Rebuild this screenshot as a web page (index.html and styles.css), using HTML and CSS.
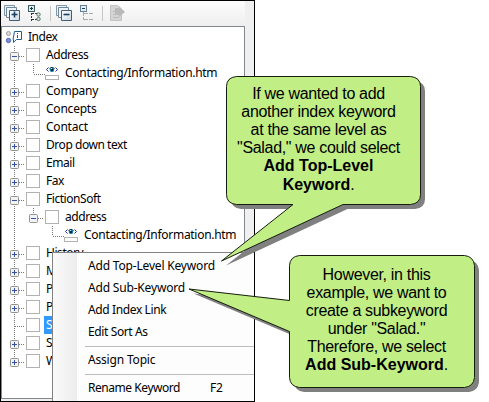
FILE: index.html
```html
<!DOCTYPE html>
<html lang="en">
<head>
<meta charset="utf-8">
<title>Index</title>
<link rel="stylesheet" href="styles.css">
</head>
<body>
<svg class="defs" width="0" height="0">
  <defs>
    <linearGradient id="page" x2="1" y2="1"><stop offset="0" stop-color="#fff"/><stop offset="1" stop-color="#ccd9e4"/></linearGradient>
    <g id="box"><rect x="24.5" y="2.500" width="13" height="13" fill="#fff" stroke="#b2b2b2"/></g>
    <g id="knob"><rect x="8.500" y="6.500" width="8" height="8" rx="1" fill="#f3f3f3" stroke="#929292"/><path d="M10 10.500h5" stroke="#3450a8"/></g>
    <g id="vline"><path d="M12.500 0v18" class="dots"/></g>
    <g id="minus"><path d="M17 10.500h6" class="dots"/><use href="#knob"/><use href="#box"/></g>
    <g id="plus"><use href="#minus"/><path d="M12.500 8v5" stroke="#3450a8"/></g>
    <g id="topic"><path d="M31.500 0v10M32 10.500h11" class="dots"/><rect x="43.500" y="11.500" width="13" height="4" fill="#fff" stroke="#b2b2b2"/><path d="M46.500 3.500l-2 2 2 2M53.500 3.500l2 2-2 2" fill="none" stroke="#1a2cb0"/><path d="M47.500 4.500q2.500-2.500 5 0" fill="none" stroke="#222"/><circle cx="50" cy="5.700" r="2.300" fill="#087d9c"/><circle cx="50" cy="6" r="1" fill="#002"/><path d="M49 4.500h1" stroke="#9ff"/></g>
    <g id="stack"><path d="M.500.500h10v10h-10z" fill="#edf4f9" stroke="#8197a8"/><path d="M2.500 2.500h10v10h-10z" fill="#edf4f9" stroke="#708799"/><path d="M5.500 5.500h10v10h-10z" fill="url(#page)" stroke="#415e76"/></g>
  </defs>
</svg>
<main class="stage">
  <section class="window">
    <header class="toolbar">
      <svg width="130" height="25" viewBox="0 0 130 25">
        <use href="#stack" x="3" y="4"/><path d="M10.500 13.500h6M13.500 10.500v6" stroke="#173f64" stroke-width="1.600"/>
        <g fill="none" stroke="#333" stroke-dasharray="2 1"><path d="M30.500 9v11M31 12.500h5M31 18.500h5"/></g>
        <rect x="27.500" y="4.500" width="6" height="6" fill="#dcece8" stroke="#3e5d67"/><path d="M29 7.500h3M30.500 6v3" stroke="#17413c"/>
        <g fill="#dbe9df" stroke="#57756c"><circle cx="37.500" cy="13.500" r="1.700"/><circle cx="37.500" cy="18" r="1.700"/></g>
        <path d="M49.500 5v15M101.500 5v15" stroke="#c6c6c6"/>
        <use href="#stack" x="55" y="4"/><path d="M62.500 13.500h6" stroke="#173f64" stroke-width="1.600"/>
        <path d="M82.500 11v8M83 12.500h9M83 18.500h9" fill="none" stroke="#aaa" stroke-dasharray="4 1"/>
        <rect x="79.500" y="4.500" width="6" height="6" fill="#e5eef4" stroke="#657f95"/><path d="M81 7.500h3" stroke="#173f64"/>
        <path d="M109.500 4.500h7l4 4v11h-11z" fill="#d4d4d4" stroke="#c2c2c2"/><path d="M112 10.500h5M112 13.500h6M112 16.500h6" stroke="#bbb"/><path d="M114 7h4v-2l6 6-6 5v-3h-4z" fill="#b9b9b9"/>
      </svg>
    </header>
    <div class="tree">
      <div class="row root"><svg viewBox="0 0 24 18"><circle cx="6.500" cy="5.500" r="2" fill="#ddd" stroke="#999"/><circle cx="6.500" cy="12.500" r="2.200" fill="#7590d8" stroke="#5368af"/><path d="M12.500 3.500h7v8h-5l-3 3v-3h-.5z" fill="#fff" stroke="#18628d"/><path d="M15.500 5v1M15.500 7v3" stroke="#18628d"/></svg><span>Index</span></div>
      <div class="row"><svg><use href="#vline"/><use href="#minus"/></svg><span>Address</span></div>
      <div class="row child"><svg><use href="#vline"/><use href="#topic"/></svg><span class="file">Contacting/Information.htm</span></div>
      <div class="row"><svg><use href="#vline"/><use href="#plus"/></svg><span class="wide">Company</span></div>
      <div class="row"><svg><use href="#vline"/><use href="#plus"/></svg><span class="wide">Concepts</span></div>
      <div class="row"><svg><use href="#vline"/><use href="#plus"/></svg><span class="wide">Contact</span></div>
      <div class="row"><svg><use href="#vline"/><use href="#plus"/></svg><span>Drop down text</span></div>
      <div class="row"><svg><use href="#vline"/><use href="#plus"/></svg><span>Email</span></div>
      <div class="row"><svg><use href="#vline"/><use href="#plus"/></svg><span>Fax</span></div>
      <div class="row"><svg><use href="#vline"/><use href="#minus"/></svg><span>FictionSoft</span></div>
      <div class="row child"><svg><use href="#vline"/><path d="M31.500 0v6" class="dots"/><use href="#minus" x="19"/></svg><span>address</span></div>
      <div class="row grandchild"><svg><use href="#vline"/><use href="#topic" x="19"/></svg><span class="file">Contacting/Information.htm</span></div>
      <div class="row"><svg><use href="#vline"/><use href="#plus"/></svg><span>History</span></div>
      <div class="row"><svg><use href="#vline"/><use href="#plus"/></svg><span>M</span></div>
      <div class="row"><svg><use href="#vline"/><use href="#plus"/></svg><span>P</span></div>
      <div class="row"><svg><use href="#vline"/><use href="#plus"/></svg><span>P</span></div>
      <div class="row selected"><svg><use href="#vline"/><path d="M13 10.500h10" class="dots"/><use href="#box"/></svg><span>S</span></div>
      <div class="row"><svg><use href="#vline"/><use href="#plus"/></svg><span>S</span></div>
      <div class="row"><svg><path d="M12.500 0v9" class="dots"/><use href="#plus"/></svg><span>W</span></div>
    </div>
    <nav class="menu">
      <div class="item">Add Top-Level Keyword</div>
      <div class="item">Add Sub-Keyword</div>
      <div class="item">Add Index Link</div>
      <div class="item">Edit Sort As</div>
      <hr>
      <div class="item">Assign Topic</div>
      <hr>
      <div class="item"><span class="command">Rename Keyword</span><span>F2</span></div>
    </nav>
  </section>
  <svg class="bubbles" width="489" height="402" viewBox="0 0 489 402">
    <defs>
      <path id="b1" d="M236.500 76.500H410.500Q420.500 77.500 420.500 86.500V194.500Q420.500 203.500 410.500 204.500H343L221.500 261L293 204.500H236.500Q226.500 203.500 226.500 194.500V86.500Q226.500 77.500 236.500 76.500Z"/>
      <path id="b2" d="M299.500 255.500H464.500Q473.500 256.500 474.500 265.500V377.500Q473.500 386.500 464.500 387.500H299.500Q290 386.500 289.500 377.500V331.500L189 289L289.500 300.500V265.500Q290 256.500 299.500 255.500Z"/>
    </defs>
    <g fill="#808080"><use href="#b1" x="4.500" y="4.500"/><use href="#b2" x="4.500" y="4.500"/></g>
    <g fill="#c1ee85" stroke="#151d0d"><use href="#b1"/><use href="#b2"/></g>
  </svg>
  <p class="note first">If we wanted to add<br>another index keyword<br>at the same level as<br>"Salad," we could select<br><b>Add Top-Level<br><span class="last">Keyword</span></b>.</p>
  <p class="note second">However, in this<br>example, we want to<br>create a subkeyword<br>under "Salad."<br>Therefore, we select<br><b>Add Sub-Keyword</b>.</p>
</main>
</body>
</html>
```
FILE: styles.css
```css
* { box-sizing: border-box; }
body { margin: 0; background: #fff; overflow: hidden; font: 12px/18px "Noto Sans", sans-serif; color: #000; }
.defs { position: absolute; }
.stage { position: relative; width: 489px; height: 402px; }
.window { position: relative; width: 255px; height: 402px; border: 1px solid #000; background: #f0f0f0; overflow: hidden; }
.toolbar { width: 244px; height: 25px; background: linear-gradient(#fcfcfc, #efefef); }
.toolbar svg { display: block; }
.tree { width: 244px; height: 373px; border: 1px solid #828790; background: #fff; padding-top: 1px; }
.row { display: flex; height: 18px; white-space: nowrap; letter-spacing: -.45px; }
.row svg { flex: none; width: 42px; height: 18px; display: block; }
.row.root svg { width: 24px; }
.row.child svg { width: 61px; }
.row.grandchild svg { width: 80px; }
.row span { padding: 0 2px; }
.row .file { letter-spacing: -.29px; }
.row .wide { letter-spacing: -.22px; }
.selected span { width: 40px; background: #3399ff; color: #fff; }
.dots { fill: none; stroke: #777; stroke-dasharray: 1 1; }
.menu { position: absolute; left: 51px; top: 251px; width: 204px; height: 160px; border: 1px solid #828282; border-right: 0; padding-top: 2px; background: linear-gradient(90deg, #fafafa, #ededed 24px, #fdfdfd 24px); letter-spacing: -.18px; }
.item { display: flex; height: 22px; padding-left: 35px; line-height: 21px; white-space: nowrap; }
.item:nth-child(3), .item:nth-child(4) { letter-spacing: -.38px; }
.command { width: 122px; letter-spacing: -.45px; }
.menu hr { height: 1px; margin: 3px 2px 2px 32px; border: 0; background: #bdbdbd; }
.bubbles { position: absolute; left: 0; top: 0; }
.note { position: absolute; margin: 0; text-align: center; white-space: nowrap; font: 16px/18px "Liberation Sans", sans-serif; letter-spacing: -.32px; }
.note b { letter-spacing: 0; }
.note .last { line-height: 20px; }
.first { left: 226px; top: 85px; width: 185px; }
.second { left: 289px; top: 266px; width: 175px; }
```
